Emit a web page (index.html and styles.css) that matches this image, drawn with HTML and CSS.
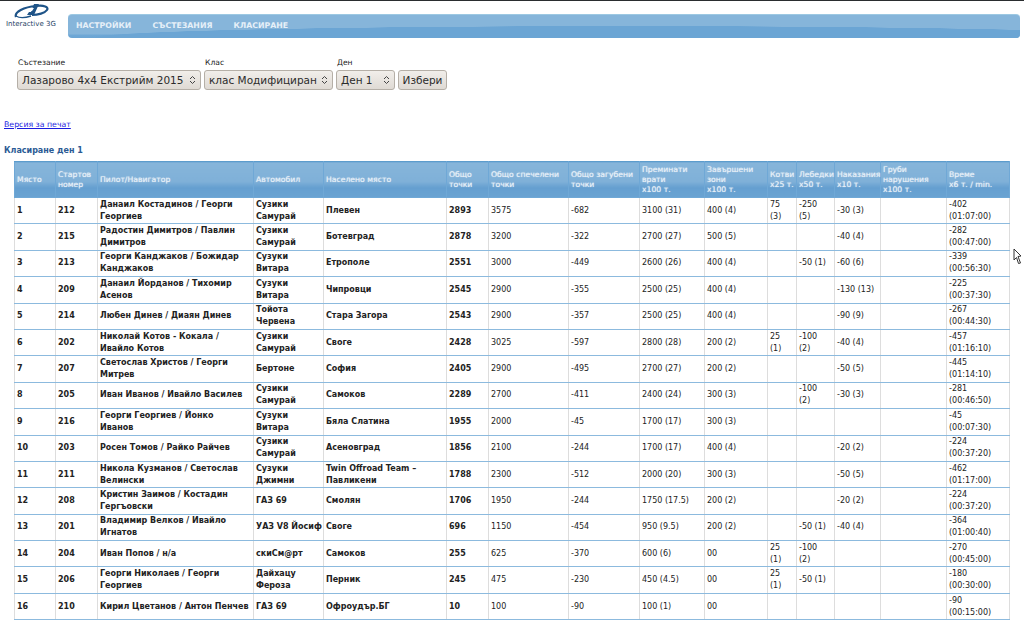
FILE: index.html
```html
<!DOCTYPE html>
<html>
    <head>
        <meta charset="UTF-8">
        <title>Класиране</title>
        <link rel="stylesheet" href="styles.css">
    </head>

    <body>
        <div class="header">
            <div class="logo">
                <svg class="logo-mark" width="36" height="17" viewBox="0 0 36 17">
                    <path d="M2 14 C0 9 10 4 22 3 C30 2 35 4 33 7 C31 10 24 12 18 12" fill="none" stroke="#1f5488" stroke-width="2.2"/>
                    <path d="M2 13 C5 15 11 15 17 13" fill="none" stroke="#1f5488" stroke-width="1.4"/>
                    <path d="M20 1 L25 1 L20 12 L13 12 L15 9 L17 9 Z" fill="#1f5488"/>
                    <path d="M17 5 L20 5 L18 8 L15 8 Z" fill="#fff"/>
                </svg>
                <div class="logo-text">Interactive 3G</div>
            </div>
            <ul class="nav">
                <li><a href="#">НАСТРОЙКИ</a></li>
                <li><a href="#">СЪСТЕЗАНИЯ</a></li>
                <li><a href="#">КЛАСИРАНЕ</a></li>
            </ul>
        </div>

        <form class="filter">
            <div class="field">
                <label>Състезание</label>
                <select class="sel-race"><option>Лазарово 4х4 Екстрийм 2015</option></select>
            </div>
            <div class="field">
                <label>Клас</label>
                <select class="sel-class"><option>клас Модифициран</option></select>
            </div>
            <div class="field">
                <label>Ден</label>
                <select class="sel-day"><option>Ден 1</option></select>
            </div>
            <button type="button">Избери</button>
        </form>

        <a class="print-link" href="#">Версия за печат</a>
        <h2 class="title">Класиране ден 1</h2>

        <table class="results">
            <colgroup>
                <col class="c-place"><col class="c-start"><col class="c-pilot"><col class="c-car"><col class="c-town">
                <col class="c-total"><col class="c-won"><col class="c-lost"><col class="c-gates"><col class="c-zones">
                <col class="c-anchor"><col class="c-winch"><col class="c-pen"><col class="c-rough"><col class="c-time">
            </colgroup>
            <thead>
                <tr>
                    <th>Място</th><th>Стартов<br>номер</th><th>Пилот/Навигатор</th><th>Автомобил</th><th>Населено място</th>
                    <th>Общо<br>точки</th><th>Общо спечелени<br>точки</th><th>Общо загубени<br>точки</th><th>Преминати<br>врати<br>х100 т.</th><th>Завършени<br>зони<br>х100 т.</th>
                    <th>Котви<br>х25 т.</th><th>Лебедки<br>х50 т.</th><th>Наказания<br>х10 т.</th><th>Груби<br>нарушения<br>х100 т.</th><th>Време<br>х6 т. / min.</th>
                </tr>
            </thead>
            <tbody>
                <tr><td class="b">1</td><td class="b">212</td><td class="b">Данаил Костадинов / Георги Георгиев</td><td class="b">Сузики Самурай</td><td class="b">Плевен</td><td class="b">2893</td><td>3575</td><td>-682</td><td>3100 (31)</td><td>400 (4)</td><td>75<br>(3)</td><td>-250<br>(5)</td><td>-30 (3)</td><td></td><td>-402 (01:07:00)</td></tr>
                <tr><td class="b">2</td><td class="b">215</td><td class="b">Радостин Димитров / Павлин Димитров</td><td class="b">Сузики Самурай</td><td class="b">Ботевград</td><td class="b">2878</td><td>3200</td><td>-322</td><td>2700 (27)</td><td>500 (5)</td><td></td><td></td><td>-40 (4)</td><td></td><td>-282 (00:47:00)</td></tr>
                <tr><td class="b">3</td><td class="b">213</td><td class="b">Георги Канджаков / Божидар Канджаков</td><td class="b">Сузуки Витара</td><td class="b">Етрополе</td><td class="b">2551</td><td>3000</td><td>-449</td><td>2600 (26)</td><td>400 (4)</td><td></td><td>-50 (1)</td><td>-60 (6)</td><td></td><td>-339 (00:56:30)</td></tr>
                <tr><td class="b">4</td><td class="b">209</td><td class="b">Данаил Йорданов / Тихомир Асенов</td><td class="b">Сузуки Витара</td><td class="b">Чипровци</td><td class="b">2545</td><td>2900</td><td>-355</td><td>2500 (25)</td><td>400 (4)</td><td></td><td></td><td>-130 (13)</td><td></td><td>-225 (00:37:30)</td></tr>
                <tr><td class="b">5</td><td class="b">214</td><td class="b">Любен Динев / Диаян Динев</td><td class="b">Тойота<br>Червена</td><td class="b">Стара Загора</td><td class="b">2543</td><td>2900</td><td>-357</td><td>2500 (25)</td><td>400 (4)</td><td></td><td></td><td>-90 (9)</td><td></td><td>-267 (00:44:30)</td></tr>
                <tr><td class="b">6</td><td class="b">202</td><td class="b">Николай Котов - Кокала / Ивайло Котов</td><td class="b">Сузики Самурай</td><td class="b">Своге</td><td class="b">2428</td><td>3025</td><td>-597</td><td>2800 (28)</td><td>200 (2)</td><td>25<br>(1)</td><td>-100<br>(2)</td><td>-40 (4)</td><td></td><td>-457 (01:16:10)</td></tr>
                <tr><td class="b">7</td><td class="b">207</td><td class="b">Светослав Христов / Георги Митрев</td><td class="b">Бертоне</td><td class="b">София</td><td class="b">2405</td><td>2900</td><td>-495</td><td>2700 (27)</td><td>200 (2)</td><td></td><td></td><td>-50 (5)</td><td></td><td>-445 (01:14:10)</td></tr>
                <tr><td class="b">8</td><td class="b">205</td><td class="b">Иван Иванов / Ивайло Василев</td><td class="b">Сузики Самурай</td><td class="b">Самоков</td><td class="b">2289</td><td>2700</td><td>-411</td><td>2400 (24)</td><td>300 (3)</td><td></td><td>-100<br>(2)</td><td>-30 (3)</td><td></td><td>-281 (00:46:50)</td></tr>
                <tr><td class="b">9</td><td class="b">216</td><td class="b">Георги Георгиев / Йонко<br>Иванов</td><td class="b">Сузуки Витара</td><td class="b">Бяла Слатина</td><td class="b">1955</td><td>2000</td><td>-45</td><td>1700 (17)</td><td>300 (3)</td><td></td><td></td><td></td><td></td><td>-45<br>(00:07:30)</td></tr>
                <tr><td class="b">10</td><td class="b">203</td><td class="b">Росен Томов / Райко Райчев</td><td class="b">Сузики Самурай</td><td class="b">Асеновград</td><td class="b">1856</td><td>2100</td><td>-244</td><td>1700 (17)</td><td>400 (4)</td><td></td><td></td><td>-20 (2)</td><td></td><td>-224 (00:37:20)</td></tr>
                <tr><td class="b">11</td><td class="b">211</td><td class="b">Никола Кузманов / Светослав Велински</td><td class="b">Сузуки Джимни</td><td class="b">Twin Offroad Team – Павликени</td><td class="b">1788</td><td>2300</td><td>-512</td><td>2000 (20)</td><td>300 (3)</td><td></td><td></td><td>-50 (5)</td><td></td><td>-462 (01:17:00)</td></tr>
                <tr><td class="b">12</td><td class="b">208</td><td class="b">Кристин Заимов / Костадин Гергъовски</td><td class="b">ГАЗ 69</td><td class="b">Смолян</td><td class="b">1706</td><td>1950</td><td>-244</td><td>1750 (17.5)</td><td>200 (2)</td><td></td><td></td><td>-20 (2)</td><td></td><td>-224 (00:37:20)</td></tr>
                <tr><td class="b">13</td><td class="b">201</td><td class="b">Владимир Велков / Ивайло Игнатов</td><td class="b">УАЗ&nbsp;V8&nbsp;Йосиф</td><td class="b">Своге</td><td class="b">696</td><td>1150</td><td>-454</td><td>950 (9.5)</td><td>200 (2)</td><td></td><td>-50 (1)</td><td>-40 (4)</td><td></td><td>-364 (01:00:40)</td></tr>
                <tr><td class="b">14</td><td class="b">204</td><td class="b">Иван Попов / н/а</td><td class="b">скиСм@рт</td><td class="b">Самоков</td><td class="b">255</td><td>625</td><td>-370</td><td>600 (6)</td><td>00</td><td>25<br>(1)</td><td>-100<br>(2)</td><td></td><td></td><td>-270 (00:45:00)</td></tr>
                <tr><td class="b">15</td><td class="b">206</td><td class="b">Георги Николаев / Георги Георгиев</td><td class="b">Дайхацу Фероза</td><td class="b">Перник</td><td class="b">245</td><td>475</td><td>-230</td><td>450 (4.5)</td><td>00</td><td>25<br>(1)</td><td>-50 (1)</td><td></td><td></td><td>-180 (00:30:00)</td></tr>
                <tr><td class="b">16</td><td class="b">210</td><td class="b">Кирил Цветанов / Антон Пенчев</td><td class="b">ГАЗ 69</td><td class="b">Офроудър.БГ</td><td class="b">10</td><td>100</td><td>-90</td><td>100 (1)</td><td>00</td><td></td><td></td><td></td><td></td><td>-90<br>(00:15:00)</td></tr>
            </tbody>
        </table>

        <svg class="cursor" width="9" height="17" viewBox="0 0 9 17">
            <path d="M1 1 L8 8 L5 8.5 L7.5 15 L5.5 15.5 L3.5 9.5 L1 12 Z" fill="#fff" stroke="#333" stroke-width="1"/>
        </svg>
    </body>
</html>
```

FILE: styles.css
```css
* {
    box-sizing: border-box;
}

body {
    margin: 0;
    border-top: 1px solid #2a2d2f;
    background: #fff;
    color: #222;
    font-family: "DejaVu Sans", sans-serif;
    font-size: 8px;
}

.header {
    display: flex;
    height: 36px;
}

.logo {
    width: 68px;
    flex: none;
    padding-left: 6px;
}

.logo-mark {
    display: block;
    margin: 2px 0 0 8px;
}

.logo-text {
    margin-top: 0;
    font-size: 7px;
    line-height: 9px;
    color: #1f3f66;
}

.nav {
    display: flex;
    gap: 21px;
    width: 952px;
    height: 24px;
    margin: 13px 0 0;
    padding: 0 0 2px 8px;
    list-style: none;
    border-top: 1px solid #9cc8e2;
    border-radius: 4px;
    background:
        radial-gradient(ellipse 540px 12px at 560px 100%, #6ba5d4 98%, transparent 100%),
        linear-gradient(#86b5da 0, #86b5da 19px, #6fa8d6 20px, #6ba5d4 100%);
    align-items: center;
}

.nav a {
    color: #e6f0f8;
    font-size: 7.8px;
    font-weight: bold;
    text-decoration: none;
}

.filter {
    display: flex;
    align-items: flex-end;
    gap: 3px;
    margin: 21px 0 0 17px;
}

.field label {
    display: block;
    margin: 0 0 2px 1px;
    font-size: 7.6px;
    line-height: 10px;
}

.filter select,
.filter button {
    height: 20px;
    margin: 0;
    border: 1px solid #b5afa7;
    border-radius: 3px;
    color: #2b2b2b;
    font-family: "DejaVu Sans", sans-serif;
    font-size: 10.5px;
    background-color: #e9e5e0;
}

.filter select {
    display: block;
    appearance: none;
    padding: 0 14px 0 4px;
    background-image:
        url("data:image/svg+xml,%3Csvg xmlns='http://www.w3.org/2000/svg' width='7' height='10'%3E%3Cpath d='M1 4 L3.5 1.5 L6 4 M1 6 L3.5 8.5 L6 6' fill='none' stroke='%23444'/%3E%3C/svg%3E"),
        linear-gradient(#f1eeea, #dfdad4);
    background-repeat: no-repeat;
    background-position: right 4px center, 0 0;
}

.filter button {
    width: 49px;
    padding: 0;
    background: linear-gradient(#f1eeea, #dfdad4);
}

.sel-race {
    width: 184px;
}

.sel-class {
    width: 129px;
}

.sel-day {
    width: 59px;
}

.print-link {
    display: block;
    width: max-content;
    margin: 29px 0 0 4px;
    color: #1a1ae0;
    font-size: 7.8px;
    line-height: 12px;
}

.title {
    margin: 14px 0 0 4px;
    color: #2b5a94;
    font-size: 8px;
    line-height: 12px;
}

.results {
    table-layout: fixed;
    width: 995px;
    margin: 4px 0 0 14px;
    border-collapse: collapse;
}

.c-place { width: 41px; }
.c-start { width: 42px; }
.c-pilot { width: 156px; }
.c-car { width: 70px; }
.c-town { width: 123px; }
.c-total { width: 42px; }
.c-won { width: 80px; }
.c-lost { width: 71px; }
.c-gates { width: 65px; }
.c-zones { width: 63px; }
.c-anchor { width: 29px; }
.c-winch { width: 38px; }
.c-pen { width: 46px; }
.c-rough { width: 66px; }
.c-time { width: 63px; }

.results th {
    height: 36px;
    padding: 0 0 0 2px;
    border: 1px solid #6fa8d6;
    border-top: 1px solid #5c9ccc;
    background: linear-gradient(#86b5da 0, #7fb0d8 55%, #659fd0 72%, #6aa3d2 100%);
    color: #e6eff7;
    font-size: 7.7px;
    font-weight: normal;
    line-height: 10px;
    text-align: left;
    text-shadow: 0 0 1px #e6eff7;
}

.results td {
    height: 26.4px;
    padding: 0 2px;
    border: 1px solid #ddd;
    border-top: 1px solid #8cbade;
    border-bottom: 1px solid #8cbade;
    line-height: 12px;
    overflow: hidden;
}

.results .b {
    font-weight: bold;
}

.cursor {
    position: absolute;
    left: 1013px;
    top: 248px;
}
```
